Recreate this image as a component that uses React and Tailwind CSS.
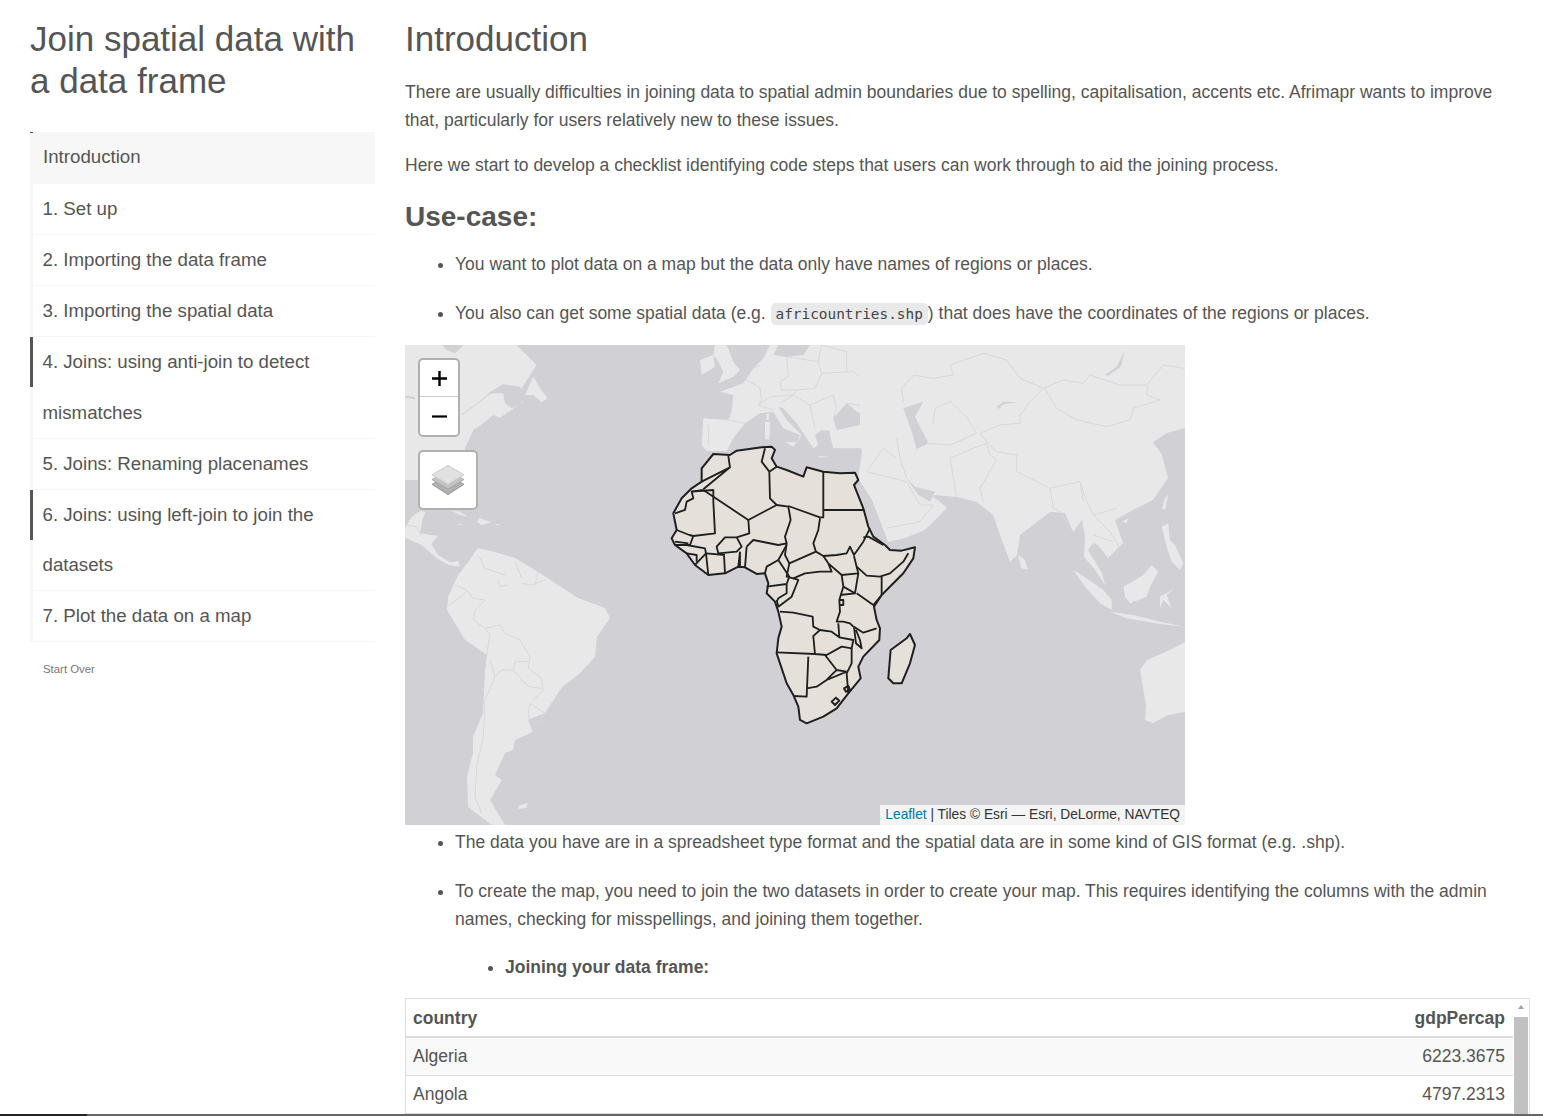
const nav = [
  { lines: ['1. Set up'] },
  { lines: ['2. Importing the data frame'] },
  { lines: ['3. Importing the spatial data'] },
  { lines: ['4. Joins: using anti-join to detect', 'mismatches'], mark: true, extra: true },
  { lines: ['5. Joins: Renaming placenames'] },
  { lines: ['6. Joins: using left-join to join the', 'datasets'], mark: true },
  { lines: ['7. Plot the data on a map'] },
];

function Sidebar() {
  return (
    <aside className="w-[345px] shrink-0 ml-[30px]">
      <h1 className="text-[35px] leading-[42px] font-normal pt-[18px]">Join spatial data with a data frame</h1>
      <div className="mt-[30px] text-[18.7px]">
        <div className="h-[52px] leading-[50px] bg-[#f7f7f7] pl-[13px] relative">
          <span className="absolute left-0 top-0 w-[3px] h-px bg-[#555]"></span>
          Introduction
        </div>
        {nav.map((item) => (
          <div key={item.lines[0]} className="border-b border-[#f7f7f7]">
            {item.lines.map((line, i) => (
              <div
                key={line}
                className={
                  'pl-[9.5px] border-l-[3px] ' +
                  (item.extra && i === 1 ? 'leading-[51px] ' : 'leading-[50px] ') +
                  (item.mark && i === 0 ? 'border-[#555]' : 'border-[#f7f7f7]')
                }
              >
                {line}
              </div>
            ))}
          </div>
        ))}
        <div className="text-[11.4px] text-[#777] pl-[13px] mt-[13px]">Start Over</div>
      </div>
    </aside>
  );
}

function WorldMap() {
  return (
    <svg viewBox="405 345 780 480" className="w-[780px] h-[480px] block">
      <rect x="405" y="345" width="780" height="480" fill="#d0d0d5" />
      <g className="blur-[0.5px]">
        {/* north and central america */}
        <g transform="translate(405 345) scale(0.3333)" fill="#e8e8e9">
          <path d="M0 0H335L395 60L350 130L355 170L285 218L265 210L235 235L205 255L180 310L170 420L40 405H0Z" />
          <path d="M0 548L20 515L45 498L62 500L52 525L45 565L75 570L100 572L78 598L100 630L135 652L160 648L165 665L130 660L95 640L50 600L0 578Z" />
          <path d="M135 495L165 500L190 515L165 510ZM225 520L260 532L230 540L215 530ZM270 537L290 538L275 541ZM160 535L175 538L163 541Z" />
          <path d="M110 0H175L150 25L125 15Z" fill="#d0d0d5" />
          <path d="M250 145L295 118L345 125L362 155L345 178L320 190L300 175L295 145Z" fill="#d0d0d5" />
          <path d="M360 150L385 95L405 130L428 160L410 172L385 150Z" />
          <path d="M170 210L230 165L270 135L295 125" fill="none" stroke="#d0d0d5" strokeWidth="3" />
          <path d="M0 155L30 160" fill="none" stroke="#d0d0d5" strokeWidth="6" />
        </g>
        {/* south america */}
        <g fill="#e8e8e9">
          <path d="M448 597L447 610L465 640L487 655L485 670L483 713L473 737L473 753L467 777L468 807L492 825H505L490 800L502 780L495 775L505 753L513 750L515 740L533 732L528 720L545 713L562 687L578 675L595 657L597 637L610 618L605 608L578 598L555 583L535 570L515 558L495 552L478 548L468 562L458 575Z" />
          <path d="M518 806L528 803L526 808L519 809Z" />
        </g>
        {/* europe */}
        <g transform="translate(690 345) scale(0.3333)" fill="#e8e8e9">
          <path d="M90 140L160 115L190 70L220 40L240 0H265L250 30L290 35L340 30L360 0H600V300L530 310L430 310L420 270L420 258L395 255L375 270L385 300L370 310L320 235L280 190L265 185L290 225L335 270L320 295L330 270L280 250L250 200L210 205L165 235L130 280L110 318L50 318L35 300L40 220L115 225L125 200L130 150Z" />
          <path d="M75 0H110L130 50L150 75L130 95L85 115L100 80L85 50L70 30Z" />
          <path d="M30 45L70 30L75 65L35 90Z" />
          <path d="M225 230L240 232L238 285L225 282ZM228 208L238 205L236 226L230 226ZM285 290L320 292L310 306ZM385 333L420 335L390 338Z" />
          <path d="M430 220L470 175L500 200L570 225L580 250L510 240L440 255Z" fill="#d0d0d5" />
          <path d="M505 180L540 165L530 185Z" fill="#d0d0d5" />
          <g fill="none" stroke="#d8d8db" strokeWidth="3">
            <path d="M190 70L210 60M165 100L210 130L215 165L205 180L250 195M290 35L295 95L270 110L275 135L320 135" />
            <path d="M290 35L385 50L395 85L375 130L320 135M395 85L490 80L560 130L530 185L470 175M205 180L240 155L310 150L320 135" />
            <path d="M270 175L310 150L360 180L430 150L440 190L430 220M360 180L375 250M50 240H55V300M115 225L165 235M385 50L395 0M395 0L470 20L470 80" />
          </g>
        </g>
        {/* asia mainland */}
        <path fill="#e8e8e9" d="M860 445L862 452L858 478L872 500L888 542L905 538L925 530L947 508L938 500L933 497L935 495L957 497L977 502L993 515L1000 535L1010 562L1017 555L1020 535L1050 512L1065 513L1073 532L1082 520L1085 537L1084 557L1093 567L1105 585L1102 573L1088 550L1093 543L1098 545L1108 558L1123 543L1115 520L1133 510L1153 500L1168 478L1162 455L1153 442L1167 433L1185 428V345H860Z" />
        <g fill="#e8e8e9">
          <path d="M1018 555L1025 560L1028 570L1021 568Z" />
          <path d="M1165 498L1168 495L1165 510L1162 508Z" />
          <path d="M1140 670L1147 660L1170 650L1185 642V712L1168 715L1153 723L1145 720L1146 705Z" />
        </g>
        {/* south east asia islands */}
        <g transform="translate(1060 500) scale(0.3333)" fill="#e8e8e9">
          <path d="M40 210L65 225L130 270L155 300L155 330L120 310L75 260Z" />
          <path d="M150 335L220 345L300 365L375 380L300 372L200 355Z" />
          <path d="M190 260L250 225L275 195L295 215L270 260L260 290L210 310L195 290Z" />
          <path d="M300 290L345 265L320 285L335 325L310 300L300 325Z" />
          <path d="M305 80L325 70L330 120L345 135L370 190L360 210L335 185L320 140Z" />
          <path d="M185 65L205 55L200 70Z" />
        </g>
        {/* inland seas */}
        <g transform="translate(800 345) scale(0.3333)" fill="#d0d0d5">
          <path d="M310 190L370 170L345 215L385 295L350 312L332 250Z" />
          <path d="M320 400L345 425L405 440L390 470L355 450Z" />
          <path d="M915 90L950 65L975 15L962 65L925 92Z" />
          <path d="M590 185L610 170L650 172L610 178L595 192Z" />
        </g>
        {/* faint country lines */}
        <g transform="translate(800 345) scale(0.3333)" fill="none" stroke="#d8d8db" strokeWidth="3">
          <path d="M305 130L340 90L400 100L460 90L450 60L550 25L620 45L660 100L730 130L790 105L850 115L870 90L960 120L1040 120L1090 60L1155 70" />
          <path d="M305 130L310 170M735 130L770 190L830 225L920 245L990 225L1000 190L1080 165L1040 150L1045 120" />
          <path d="M730 130L690 170L660 210L660 235L600 240L540 265L570 300L590 320L650 330L650 380L750 430L840 410L860 470L880 510L950 490" />
          <path d="M400 240L405 190L450 170L500 215L530 265L450 300L385 295" />
          <path d="M290 280L300 340L320 400M450 340L460 400L470 455M450 340L520 310L560 295L570 330L590 345L540 430L550 470" />
          <path d="M200 380L250 310L290 340M200 380L320 410L360 480L400 480M260 550L360 530L400 480" />
          <path d="M750 430L760 490L780 500L820 560M840 410L850 470M880 510L930 560L960 610M880 570L940 590" />
        </g>
        <g transform="translate(405 345) scale(0.3333)" fill="none" stroke="#d8d8db" strokeWidth="3">
          <path d="M0 540L35 545L50 575M215 630L225 640L240 670L300 690M330 650L350 700M400 680L390 720" />
        </g>
        <g transform="translate(405 580) scale(0.3333)" fill="none" stroke="#d8d8db" strokeWidth="3">
          <path d="M150 15L185 30L205 55L240 60L210 90L205 120L240 145L285 135L300 160L345 180L375 230L370 265L410 295L415 330L385 360" />
          <path d="M130 80L185 35M245 225L255 165L240 145M255 240L270 290L290 270L325 270L330 245L370 245M325 270L370 320L410 325" />
          <path d="M270 290L240 360L235 470L215 560L210 650L230 700M375 370L420 400L405 425L375 425L370 400Z" />
          <path d="M280 0L285 20L310 15M350 10L380 15L420 0" />
        </g>
      </g>
      {/* africa */}
      <g transform="translate(650 430) scale(0.3333)" fill="#e6e0da" stroke="#1f1f1f" strokeWidth="6" strokeLinejoin="round">
        <path d="M70 250L95 205L125 175L155 155L155 115L190 72L240 75L260 62L335 52L365 50L375 60L365 85L380 110L410 120L460 140L470 112L520 125L570 130L615 128L625 150L612 165L640 235L655 290L670 320L705 345L720 360L755 362L795 352L790 385L760 430L695 495L672 530L680 570L690 595L688 630L640 680L625 710L632 745L595 790L560 835L520 860L470 880L450 870L445 830L430 795L410 760L380 670L385 625L395 590L385 545L375 515L350 490L355 460L345 430L320 432L285 412L265 410L225 430L175 435L135 405L110 370L75 345L65 325L80 300Z" />
        <path d="M780 612L795 645L780 700L755 760L730 760L715 745L722 660L770 625Z" />
        <path d="M545 815L558 803L568 812L555 825Z" />
        <path d="M582 775L595 768L600 780L588 785Z" />
      </g>
      <g transform="translate(650 430) scale(0.3333)" fill="none" stroke="#1f1f1f" strokeWidth="5.5" strokeLinejoin="round">
        <path d="M155 155L240 112L235 78M240 112L160 178M160 180L125 185L130 205L110 215L105 240L75 250" />
        <path d="M160 180L295 270L380 225L360 205L358 125L335 95L345 55M358 125L380 110" />
        <path d="M125 185L190 180L190 215L195 310L130 318L118 315L80 300" />
        <path d="M295 270L298 310L260 322L225 322L200 350L205 370L260 365L275 350L260 322" />
        <path d="M380 225L415 230L422 270L405 320L410 340L385 345L310 330L290 350" />
        <path d="M415 228L510 262L520 262L520 125M520 240H640M510 265L505 300L490 340L498 365" />
        <path d="M410 340L405 375L418 400L498 365M498 365L520 378L560 375L590 370L600 350L612 375L640 335L660 295" />
        <path d="M612 378L620 410L650 437L690 440L720 430L760 395L775 370M640 322L655 320L700 345" />
        <path d="M520 378L535 400L575 435L625 430L620 410M418 400L410 440L430 445L465 430L510 425L545 425L535 400" />
        <path d="M430 445L445 450L425 500L385 530L380 510M350 470L410 462L410 490L385 505L380 515M345 430L350 410L385 390L410 345M385 390L418 440L410 462" />
        <path d="M285 412L290 350M265 410L270 365M225 430L222 375M175 435L168 370L225 375M270 410V365" />
        <path d="M110 345L165 355L168 370L135 405M110 370L140 375L140 395M75 345H120L130 318M75 335L115 340" />
        <path d="M575 435L580 470L568 510L570 545L560 575L580 575L600 580L610 590M580 470L615 490L625 430M695 495V440M620 490L670 525L695 495" />
        <path d="M390 545L430 548L488 560L490 590L510 600L545 605L568 622L565 580M568 510H580V525H568" />
        <path d="M615 490L570 495M680 595L640 608L612 590L618 640L635 655L630 630L618 600M605 655V700L590 730L595 790" />
        <path d="M488 620L510 600M490 620L495 672L530 675L575 650L605 655L610 630L568 622" />
        <path d="M380 667L495 672M475 680L470 800L430 798M525 675L560 720L530 750L500 770L470 775M590 725L560 720M590 725L530 750" />
      </g>
    </svg>
  );
}

function MapBox() {
  return (
    <div className="relative w-[780px] h-[480px]">
      <WorldMap />
      <div className="absolute left-[13px] top-[13px] w-[42px] h-[79px] border-[2px] border-[#b0b0b0] rounded-[5px] bg-white flex flex-col text-black">
        <div className="h-[37px] border-b border-[#ccc] flex items-center justify-center">
          <svg width="17" height="17" viewBox="0 0 17 17"><path d="M8.5 1V16M1 8.5H16" stroke="#000" strokeWidth="2.4" /></svg>
        </div>
        <div className="flex-1 flex items-center justify-center">
          <svg width="17" height="17" viewBox="0 0 17 17"><path d="M1 8.5H16" stroke="#000" strokeWidth="2.2" /></svg>
        </div>
      </div>
      <div className="absolute left-[13px] top-[105px] w-[60px] h-[60px] border-[2px] border-[#b0b0b0] rounded-[5px] bg-white flex items-center justify-center">
        <svg width="34" height="33" viewBox="0 0 36 34">
          <path d="M1 21L18 12L35 21L18 32Z" fill="#b0b0b0" stroke="#9a9a9a" />
          <path d="M1 16L18 7L35 16L18 26Z" fill="#c4c4c4" stroke="#a8a8a8" />
          <path d="M1 11L18 1L35 11L18 21Z" fill="#e0e0e0" stroke="#c8c8c8" />
        </svg>
      </div>
      <div className="absolute right-0 bottom-0 h-[20px] px-[5px] bg-[#f4f4f4] text-[13.75px] leading-[20px] text-[#333]">
        <span className="text-[#0078a8]">Leaflet</span> | Tiles © Esri — Esri, DeLorme, NAVTEQ
      </div>
    </div>
  );
}

function DataTable() {
  return (
    <div className="mt-[17px] w-[1125px] h-[140px] border border-[#ddd] flex">
      <table className="flex-1 self-start border-collapse">
        <thead>
          <tr className="border-b-2 border-[#ddd] font-bold">
            <th className="h-[38px] px-[7px] text-left">country</th>
            <th className="px-[8px] text-right">gdpPercap</th>
          </tr>
        </thead>
        <tbody>
          <tr className="bg-[#f9f9f9] border-b border-[#ddd]">
            <td className="h-[38px] px-[7px]">Algeria</td>
            <td className="px-[8px] text-right">6223.3675</td>
          </tr>
          <tr className="border-b border-[#ddd]">
            <td className="h-[38px] px-[7px]">Angola</td>
            <td className="px-[8px] text-right">4797.2313</td>
          </tr>
        </tbody>
      </table>
      <div className="w-[16px] shrink-0 bg-white flex flex-col items-center">
        <svg width="8" height="18" viewBox="0 0 8 18" className="shrink-0"><path d="M4 6L7 10H1Z" fill="#a3a3a3" /></svg>
        <div className="w-[14px] flex-1 bg-[#c1c1c1]"></div>
      </div>
    </div>
  );
}

export default function App() {
  return (
    <div className="h-[1116px] w-full flex flex-col overflow-hidden bg-white text-[#555] text-[17.5px] leading-[28px] font-['Liberation_Sans',Arial,sans-serif]">
      <div className="flex-1 flex min-h-0 overflow-hidden">
        <Sidebar />
        <main className="ml-[30px] w-[1125px] shrink-0">
          <h2 className="text-[35px] leading-[42px] pt-[18px]">Introduction</h2>
          <p className="mt-[18px]">
            There are usually difficulties in joining data to spatial admin boundaries due to spelling, capitalisation, accents etc. Afrimapr wants to improve that, particularly for users relatively new to these issues.
          </p>
          <p className="mt-[17px]">
            Here we start to develop a checklist identifying code steps that users can work through to aid the joining process.
          </p>
          <h3 className="text-[28px] leading-[32px] font-bold mt-[22px]">Use-case:</h3>
          <ul className="list-disc pl-[50px] mt-[17px]">
            <li>You want to plot data on a map but the data only have names of regions or places.</li>
            <li className="mt-[21px]">
              You also can get some spatial data (e.g.{' '}
              <code className="bg-[#e9e9e9] rounded-[5px] px-[5px] py-[3px] text-[14.4px] text-[#444] font-['DejaVu_Sans_Mono',monospace]">africountries.shp</code>
              ) that does have the coordinates of the regions or places.
            </li>
          </ul>
          <div className="mt-[17px]">
            <MapBox />
          </div>
          <ul className="list-disc pl-[50px] mt-[3px]">
            <li>The data you have are in a spreadsheet type format and the spatial data are in some kind of GIS format (e.g. .shp).</li>
            <li className="mt-[21px]">
              To create the map, you need to join the two datasets in order to create your map. This requires identifying the columns with the admin names, checking for misspellings, and joining them together.
              <ul className="list-disc pl-[50px] mt-[20px]">
                <li className="font-bold">Joining your data frame:</li>
              </ul>
            </li>
          </ul>
          <DataTable />
        </main>
      </div>
      <div className="h-[2px] shrink-0 flex">
        <div className="w-[87px] bg-[#222]"></div>
        <div className="flex-1 bg-[#666]"></div>
      </div>
    </div>
  );
}
